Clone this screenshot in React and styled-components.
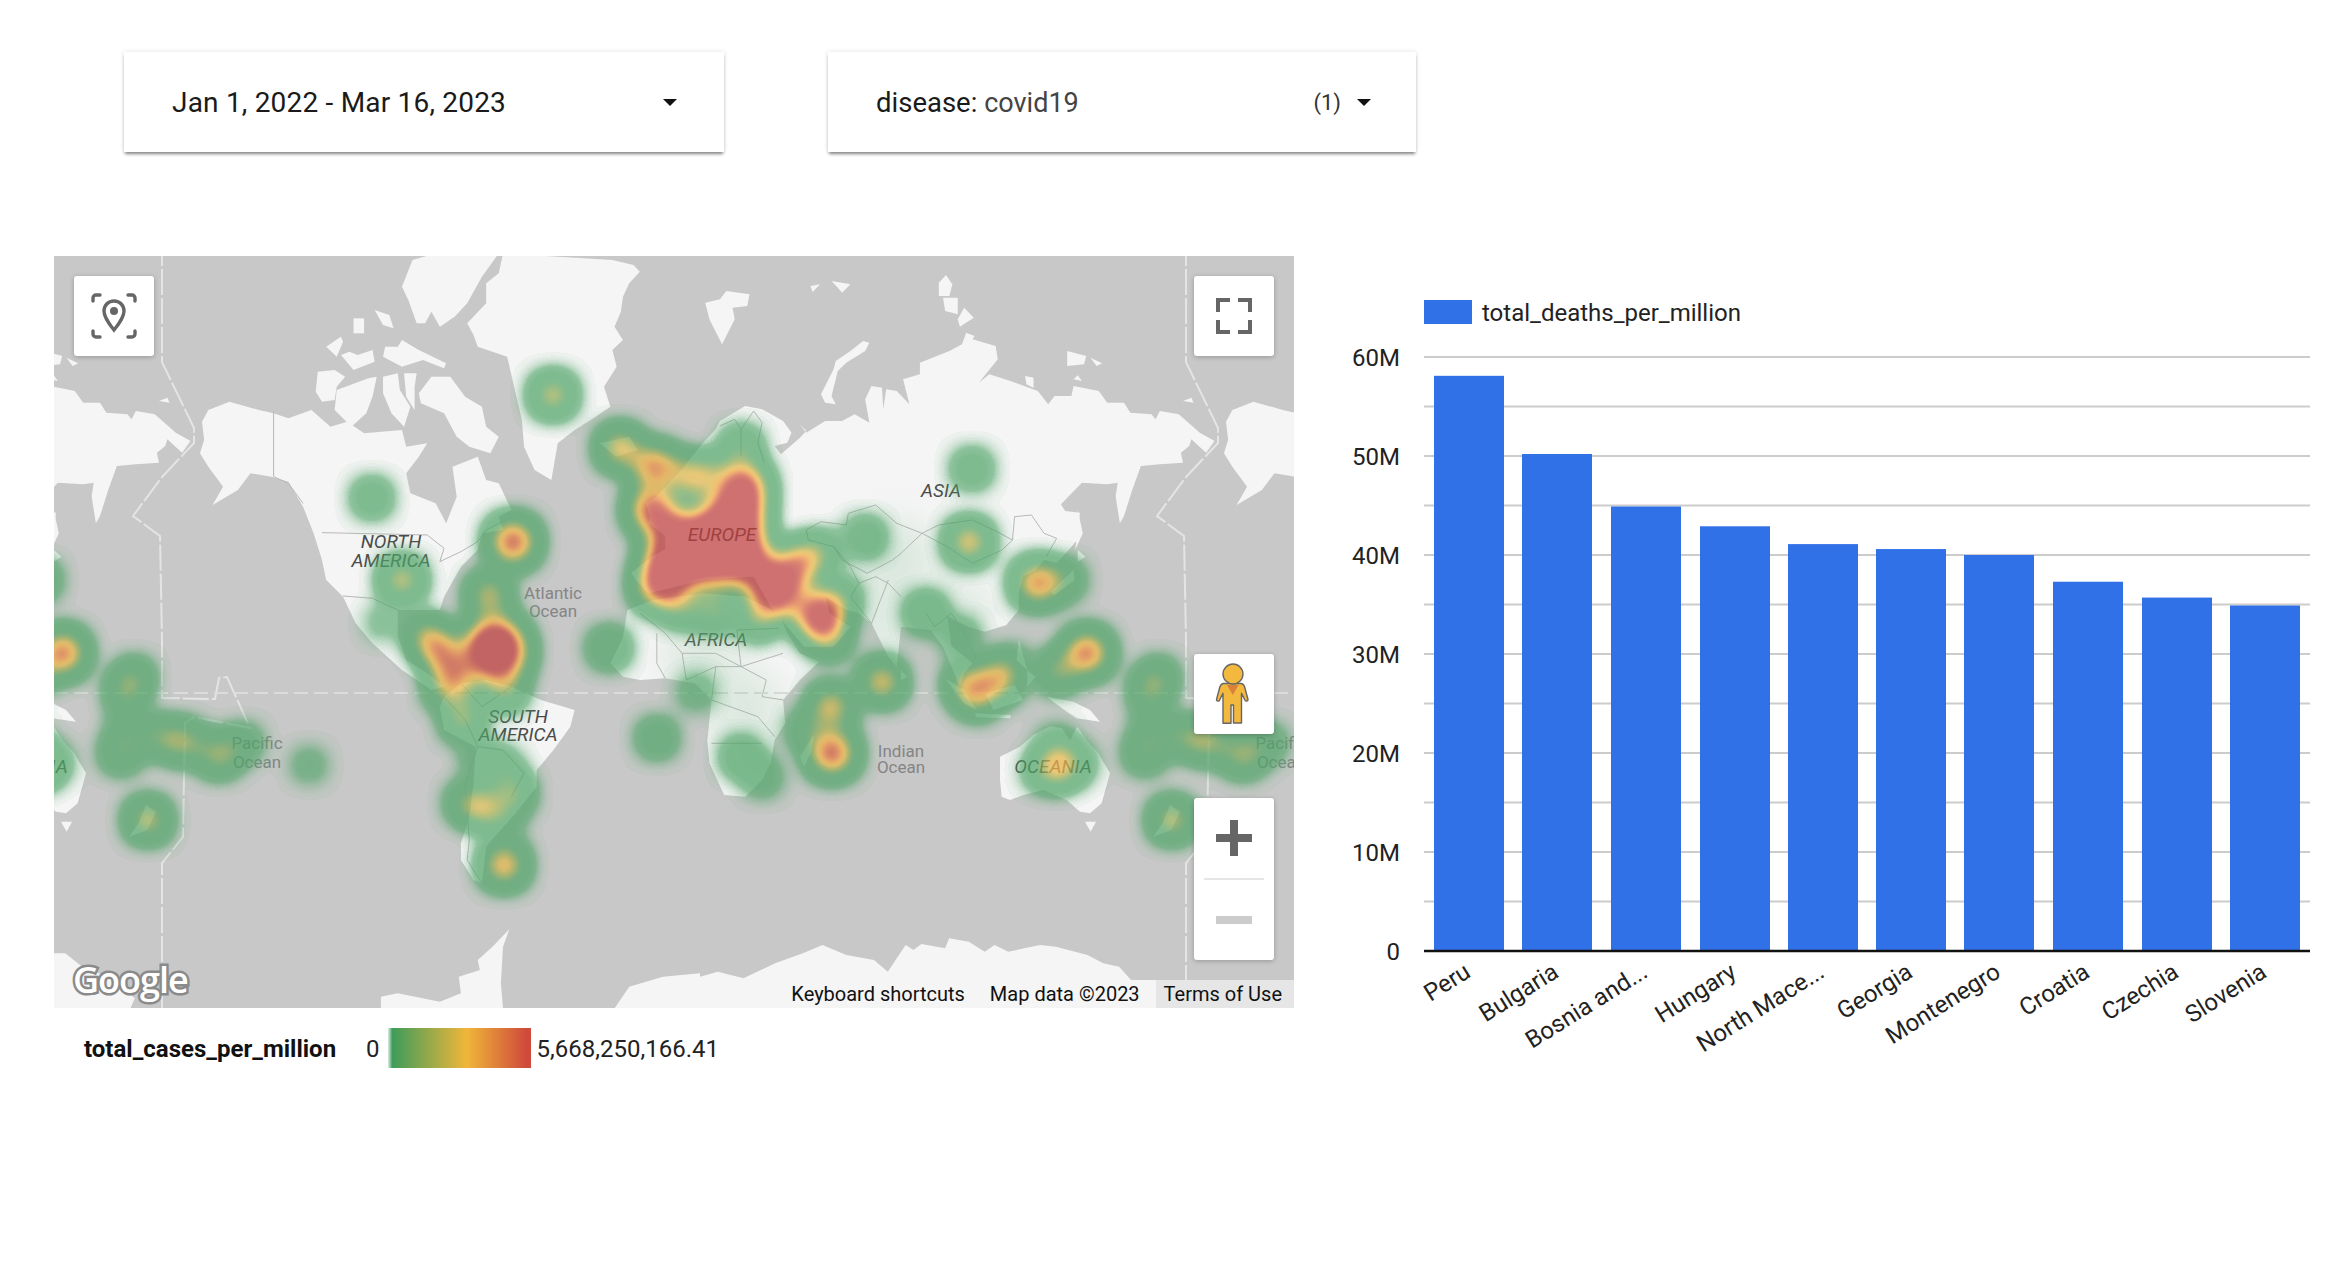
import React from "react";
import styled, { createGlobalStyle } from "styled-components";

const GlobalStyle = createGlobalStyle`
  html, body {
    margin: 0;
    background: #fff;
    font-family: Roboto, "Liberation Sans", sans-serif;
  }
`;

// land traced per region, every region has its own scale
const landRegions = [
  {
    // north america and greenland
    transform: "translate(40 240) scale(.4209 .3333)",
    land: [
      "1100,40 1290,55 1360,60 1410,75 1425,95 1400,130 1385,170 1380,215 1365,260 1385,300 1360,330 1370,380 1340,440 1355,500 1320,530 1270,570 1230,610 1215,720 1175,690 1150,620 1145,540 1130,460 1110,350 1040,320 1030,285 1015,250 1060,190 1060,130 1090,100",
      "885,60 940,40 1090,40 1050,110 1015,190 985,230 950,260 930,215 915,250 895,250 875,180 860,140",
      "660,395 700,390 725,410 705,440 700,480 670,485 655,455",
      "715,345 735,335 755,345 790,330 795,365 745,390",
      "680,320 715,290 720,305 705,350",
      "745,235 770,235 770,280 745,280",
      "795,210 830,225 840,265 815,255",
      "820,320 850,320 860,300 900,330 965,370 960,385 910,360 860,380 815,350",
      "705,450 780,415 800,410 790,470 775,520 740,560 700,510",
      "815,410 850,400 855,450 880,500 865,560 835,520 815,460",
      "865,400 895,400 890,440 890,510 870,470",
      "900,460 930,410 975,410 1010,470 1050,500 1060,560 1090,590 1070,640 1020,620 990,590 960,520 905,490",
      "385,545 400,510 450,485 520,510 555,520 590,535 645,510 690,560 730,545 770,580 860,570 870,620 920,610 900,650 870,700 880,760 940,790 965,850 990,770 980,680 1040,650 1060,720 1090,730 1120,810 1090,830 1100,870 1050,880 1040,930 1000,980 960,1070 950,1110 850,1110 850,1190 870,1260 920,1300 960,1340 930,1350 860,1290 790,1210 750,1150 720,1070 680,1020 670,960 650,880 625,800 590,725 550,710 500,700 470,750 410,795 435,740 400,680 380,640 390,600",
      "1330,610 1400,590 1420,630 1370,650",
      "1440,790 1480,760 1490,830 1450,840",
    ],
    borders: [
      "670,878 920,885 960,925 950,965 1000,935 1040,905 1060,870 1120,830",
      "555,515 555,710 590,730 625,790",
      "720,1068 790,1075 850,1110",
    ],
  },
  {
    // eurasia, north coast is from the top crop, south from the lower one
    transform: "translate(640 256) scale(.4209 .3333)",
    land: [
      "190,495 250,450 290,460 340,495 360,530 350,560 320,570 335,595 380,545 395,525 380,505 395,530 440,495 480,495 510,475 545,500 535,430 550,390 575,395 578,460 585,400 610,405 640,445 625,370 665,355 665,320 735,285 765,265 775,230 795,240 790,250 845,270 850,310 805,380 830,355 880,375 945,405 970,445 985,420 1025,420 1030,390 1090,405 1110,440 1150,440 1165,470 1215,475 1225,490 1235,465 1280,475 1330,530 1365,555 1345,590 1310,550 1305,570 1285,590 1290,620 1235,625 1190,630 1180,665 1170,700 1150,780 1140,802 1130,720 1135,680 1110,685 1050,680 1000,745 1010,765 1045,770 1040,850 1020,880 990,920 960,912 940,942 910,962 900,1012 900,1062 870,1107 820,1127 780,1112 730,1080 740,1170 790,1222 770,1252 760,1292 720,1172 690,1122 620,1112 610,1232 590,1202 550,1102 520,1072 490,1062 440,1022 450,1072 500,1112 460,1172 390,1172 350,1112 310,1052 270,962 150,972 60,1000 20,1012 -10,972 -20,950 30,900 60,880 60,840 20,800 40,720 100,640 150,560 180,520",
      "155,140 190,130 205,105 260,115 255,150 220,155 225,190 195,265 175,215 165,190",
      "530,255 545,260 535,285 490,320 470,345 455,420 465,445 440,440 430,415 460,340 465,315 500,285",
      "405,90 428,85 410,108",
      "455,75 500,85 480,110 470,95",
      "710,80 727,57 742,85 735,120 710,120",
      "720,125 755,125 755,175 725,165",
      "770,155 793,185 760,212 755,190",
      "1015,285 1060,300 1055,325 1015,330",
      "1070,305 1098,322 1085,330",
      "1290,435 1310,425 1315,440",
      "1030,370 1040,358 1050,375",
      "915,360 935,365 935,395 918,385",
    ],
    borders: ["190,510 225,490 240,520 240,600", "240,520 270,465 290,500 280,560 295,620"],
  },
  {
    // africa, south asia islands
    transform: "translate(640 380) scale(.4209 .3333)",
    land: [
      "-30,690 30,660 150,640 250,650 330,700 350,760 380,820 425,845 380,900 340,960 345,1030 320,1080 310,1150 290,1200 250,1250 200,1245 165,1150 160,1080 170,960 130,910 60,895 0,900 -40,890 -70,850 -40,770",
      "380,1130 415,1060 405,1120 390,1160",
      "1040,390 1052,460 1034,510 1040,440",
      "1040,510 1058,530 1040,545",
      "975,635 1030,570 1032,600 985,645",
      "900,780 920,870 895,840",
      "620,870 635,890 620,900",
      "725,895 770,930 800,990 770,970",
      "820,940 890,915 910,960 840,990",
      "795,1000 880,1005 880,1015 800,1012",
      "920,870 940,890 920,920",
    ],
    borders: [
      "395,450 430,425 490,435 495,400 560,375 610,430 670,460 710,435 790,420 840,450 885,480 860,510 790,550 730,500 670,460",
      "885,480 890,410 930,405 960,460 990,475 965,530",
      "395,450 400,480 460,500 480,540 540,580 600,540 620,520 670,460",
      "460,500 500,560 520,610 560,590 590,610 620,650",
      "520,610 500,650 550,730 590,600",
      "680,700 700,740 740,700 770,760 800,840",
      "0,700 60,760 100,820 180,820 240,860 340,820",
      "40,760 40,850 60,895",
      "100,820 110,900 180,860 170,960",
      "180,860 240,860 300,900 290,950 340,960",
      "170,960 280,1010 320,1070",
      "170,1090 290,1090",
      "240,860 230,750 330,745",
    ],
  },
  {
    // south america
    transform: "translate(40 640) scale(.4209 .3333)",
    land: [
      "960,170 1000,130 1060,120 1120,140 1190,180 1270,210 1260,260 1220,330 1180,390 1180,440 1130,520 1080,590 1060,620 1050,730 1030,720 1000,660 1000,610 1020,530 1030,430 1035,320 960,270 950,200",
    ],
    borders: [
      "960,170 1010,240 1040,320 1100,330 1150,400 1120,470",
      "1040,320 1010,430 1020,600 1015,660 1050,730",
      "1000,130 1050,200 1120,140",
    ],
  },
  {
    // australia, new guinea, new zealand
    transform: "translate(1000 640) scale(.3333 .3333)",
    land: [
      "0,350 60,320 100,285 150,258 185,265 210,300 232,260 260,300 295,340 330,400 305,490 270,520 240,515 200,480 130,450 70,465 30,480 5,470 0,420",
      "255,545 288,545 272,575",
      "140,170 220,185 270,210 300,245 230,235 200,215",
      "510,495 540,515 515,570 460,590 490,545",
    ],
    borders: [],
  },
];

// antarctica stays at one place, it isn't repeated with the rest
const polarRegions = [
  {
    transform: "translate(40 640) scale(.4209 .3333)",
    land: [
      "33,940 60,940 100,980 180,1020 225,1075 215,1105 33,1105",
      "810,1105 810,1070 850,1060 950,1085 1000,1060 995,1010 1045,990 1040,960 1075,920 1115,868 1100,920 1095,1030 1100,1105",
      "1365,1105 1400,1040 1480,1010 1568,1000 1568,1105",
    ],
  },
  {
    transform: "translate(700 780) scale(.3954 .3333)",
    land: [
      "0,684 0,590 45,575 110,595 190,550 260,520 310,495 370,525 440,540 475,575 520,495 540,510 560,492 620,505 630,475 680,485 720,515 745,495 780,515 860,495 900,500 980,525 1020,550 1060,560 1090,600 1502,600 1502,684",
    ],
  },
];

const hotZones = [
  "652,512 692,522 722,500 742,490 758,500 760,530 752,566 732,580 698,580 668,592 648,588 650,552 662,534",
  "468,640 485,622 510,623 524,648 516,672 488,676 468,664",
];

// x, y, radius before the blur
const heatSpots = [
  [553, 395, 12], [372, 498, 8], [620, 448, 13], [654, 467, 15], [513, 542, 17], [402, 580, 12],
  [489, 595, 12], [382, 623, 5], [425, 635, 10], [440, 650, 13], [448, 668, 9], [445, 690, 9],
  [465, 715, 9], [505, 690, 10], [460, 680, 10], [482, 807, 11], [513, 793, 10], [465, 803, 8],
  [503, 820, 7], [503, 767, 7], [480, 760, 7], [461, 723, 8], [504, 865, 14], [657, 738, 8],
  [609, 648, 9], [696, 692, 6], [741, 757, 8], [762, 777, 7], [775, 590, 22], [798, 564, 14],
  [820, 615, 20], [715, 610, 10], [682, 607, 9], [758, 620, 9], [829, 640, 9], [842, 597, 7],
  [820, 553, 9], [741, 447, 9], [710, 470, 7], [680, 470, 7], [695, 480, 11], [865, 537, 8],
  [972, 469, 8], [969, 542, 13], [1037, 583, 15], [1065, 580, 8], [926, 613, 9], [968, 685, 12],
  [998, 680, 13], [960, 637, 7], [977, 700, 9], [1011, 663, 6], [882, 682, 13], [831, 707, 13],
  [832, 753, 17], [805, 730, 7], [1087, 653, 16], [1057, 672, 10], [1150, 692, 9], [1158, 677, 8],
  [1145, 753, 9], [1152, 727, 7], [1182, 737, 9], [1208, 742, 11], [1243, 755, 11], [1267, 743, 7],
  [1057, 768, 12], [1040, 770, 6], [1077, 763, 7], [1057, 745, 7], [1172, 820, 12], [309, 765, 5.5],
  // lobes of the hot area over europe
  [652, 510, 17], [660, 585, 18], [742, 488, 20], [750, 562, 18],
];

// pale haze on the land round the heat
const hazeSpots = [
  [700, 655, 34], [745, 705, 34], [760, 760, 28], [895, 560, 40], [880, 625, 30], [960, 610, 28],
];

const mapLabels = [
  { text: "NORTH", x: 391, y: 548, kind: "land" },
  { text: "AMERICA", x: 391, y: 567, kind: "land" },
  { text: "Atlantic", x: 553, y: 599, kind: "sea" },
  { text: "Ocean", x: 553, y: 617, kind: "sea" },
  { text: "Pacific", x: 257, y: 749, kind: "sea" },
  { text: "Ocean", x: 257, y: 768, kind: "sea" },
  { text: "Pacific", x: 1281, y: 749, kind: "sea" },
  { text: "Ocean", x: 1281, y: 768, kind: "sea" },
  { text: "Indian", x: 901, y: 757, kind: "sea" },
  { text: "Ocean", x: 901, y: 773, kind: "sea" },
  { text: "ASIA", x: 941, y: 497, kind: "land" },
  { text: "EUROPE", x: 722, y: 541, kind: "land" },
  { text: "AFRICA", x: 716, y: 646, kind: "land" },
  { text: "SOUTH", x: 518, y: 723, kind: "land" },
  { text: "AMERICA", x: 518, y: 741, kind: "land" },
  { text: "OCEANIA", x: 1053, y: 773, kind: "land" },
  { text: "OCEANIA", x: 29, y: 773, kind: "land" },
];

const dateLine =
  "162,240 162,362 194,428 194,443 162,477 133,516 160,536 162,640 162,698 215,699 219,678 227,677 250,728 194,717 185,723 183,837 162,863 162,1010";

const GREEN = [79, 165, 103];
const RED = [192, 62, 62];
const heatRamp = [GREEN, GREEN, GREEN, GREEN, GREEN, [95, 165, 98], [130, 170, 90], [175, 175, 78], [225, 185, 80], [240, 175, 70], [235, 140, 70], [215, 100, 65], [200, 75, 62], RED, RED, RED, RED, RED, RED, RED, RED];
const rampChannel = (i) => heatRamp.map((c) => (c[i] / 255).toFixed(3)).join(" ");
const rampAlpha = "0 .62 .72 .72 .72 .72 .73 .74 .75 .75 .74 .73 .72 .72 .72 .72 .72 .72 .72 .72 .72";

const bars = [
  { name: "Peru", value: 58.1, x: 1434 },
  { name: "Bulgaria", value: 50.2, x: 1522 },
  { name: "Bosnia and...", value: 44.9, x: 1611 },
  { name: "Hungary", value: 42.9, x: 1700 },
  { name: "North Mace...", value: 41.1, x: 1788 },
  { name: "Georgia", value: 40.6, x: 1876 },
  { name: "Montenegro", value: 40, x: 1964 },
  { name: "Croatia", value: 37.3, x: 2053 },
  { name: "Czechia", value: 35.7, x: 2142 },
  { name: "Slovenia", value: 34.9, x: 2230 },
];

const ZERO_Y = 951;
const PER_MILLION = 9.9;
const ticks = [0, 10, 20, 30, 40, 50, 60];
const gridLines = [5, 10, 15, 20, 25, 30, 35, 40, 45, 50, 55, 60];

const Page = styled.div`
  width: 2352px;
  height: 1288px;
  overflow: hidden;
  box-sizing: border-box;
  padding-top: 52px;
`;

const FilterRow = styled.div`
  display: flex;
  gap: 104px;
  padding-left: 124px;
`;

const FilterCard = styled.div`
  width: ${(p) => p.$width}px;
  height: 100px;
  box-sizing: border-box;
  padding: 0 ${(p) => p.$right}px 0 48px;
  display: flex;
  align-items: center;
  background: #fff;
  box-shadow: 0 3px 3px -1px rgba(0, 0, 0, 0.45), 0 0 5px rgba(0, 0, 0, 0.12);
  font-size: ${(p) => p.$size}px;
  color: #1a1a1a;
  letter-spacing: ${(p) => p.$spacing}px;
`;

const FilterValue = styled.span`
  color: #444;
  font-size: 27px;
`;

const Count = styled.span`
  margin-left: auto;
  font-size: 22px;
  color: #333;
`;

const Caret = styled.i`
  width: 0;
  height: 0;
  margin-left: ${(p) => p.$gap}px;
  border-left: 7px solid transparent;
  border-right: 7px solid transparent;
  border-top: 7px solid #111;
`;

const MainRow = styled.div`
  display: flex;
  margin-top: 104px;
  padding-left: 54px;
`;

const MapColumn = styled.div`
  width: 1240px;
  flex: none;
`;

const MapFrame = styled.div`
  position: relative;
  width: 1240px;
  height: 752px;
  overflow: hidden;
  background: #c8c8c8;
`;

const MapCanvas = styled.svg`
  display: block;
  width: 1240px;
  height: 752px;
`;

const MapLabel = styled.text`
  font-family: Roboto, sans-serif;
  text-anchor: middle;
  font-size: ${(p) => (p.$kind === "land" ? 19 : 17)}px;
  font-style: ${(p) => (p.$kind === "land" ? "italic" : "normal")};
  fill: ${(p) => (p.$kind === "land" ? "#4a4a4a" : "#858585")};
`;

const ControlButton = styled.div`
  position: absolute;
  left: ${(p) => p.$left}px;
  top: ${(p) => p.$top}px;
  width: 80px;
  height: 80px;
  display: flex;
  align-items: center;
  justify-content: center;
  background: #fff;
  border-radius: 3px;
  box-shadow: 0 1px 5px rgba(0, 0, 0, 0.25);
`;

const ZoomControl = styled.div`
  position: absolute;
  left: 1140px;
  top: 542px;
  width: 80px;
  height: 162px;
  display: flex;
  flex-direction: column;
  align-items: center;
  background: #fff;
  border-radius: 3px;
  box-shadow: 0 1px 5px rgba(0, 0, 0, 0.25);
`;

const ZoomHalf = styled.div`
  height: 80px;
  width: 100%;
  display: flex;
  align-items: center;
  justify-content: center;
`;

const ZoomDivider = styled.div`
  width: 60px;
  height: 2px;
  flex: none;
  background: #e6e6e6;
`;

const GoogleMark = styled.span`
  position: absolute;
  left: 19px;
  top: 702px;
  font-family: "Open Sans", sans-serif;
  font-size: 36px;
  line-height: 44px;
  font-weight: 600;
  letter-spacing: -1px;
  color: #fff;
  -webkit-text-stroke: 5px #8a8a8a;
  paint-order: stroke fill;
`;

const Attribution = styled.div`
  position: absolute;
  right: 0;
  bottom: 0;
  height: 28px;
  display: flex;
  font-size: 20px;
  line-height: 28px;
  color: #111;
`;

const AttributionPart = styled.span`
  padding: 0 ${(p) => p.$right}px 0 ${(p) => p.$left}px;
  background: ${(p) => p.$bg};
`;

const MapLegend = styled.div`
  display: flex;
  align-items: center;
  height: 40px;
  margin-top: 20px;
  padding-left: 30px;
  font-size: 24px;
  color: #222;
`;

const LegendText = styled.span`
  margin-top: 2px;
`;

const LegendTitle = styled(LegendText)`
  font-weight: 700;
  color: #111;
  margin-right: 30px;
`;

const GradientBar = styled.div`
  width: 143px;
  height: 40px;
  margin: 0 6px 0 8px;
  background: linear-gradient(
    90deg,
    #dfeee3 0,
    #3e9c5a 3%,
    #f0b63a 55%,
    #cf4a3a 97%
  );
`;

const ChartCanvas = styled.svg`
  display: block;
  flex: none;
  width: 1024px;
  height: 824px;
  margin-left: 24px;
  font-family: Roboto, sans-serif;
  font-size: 24px;
`;

const ChartText = styled.text`
  fill: #222;
`;

function LocateIcon() {
  return (
    <svg width="80" height="80" viewBox="0 0 80 80" fill="none" stroke="#666">
      <path strokeWidth="3.4" strokeLinecap="round" d="M19 25v-3a3 3 0 0 1 3-3h4M54 19h4a3 3 0 0 1 3 3v3M19 55v3a3 3 0 0 0 3 3h4M54 61h4a3 3 0 0 0 3-3v-3" />
      <path strokeWidth="3.4" d="M40 25c-6 0-10 4.600-10 10 0 7 10 19 10 19s10-12 10-19c0-5.400-4-10-10-10z" />
      <circle cx="40" cy="35" r="4" fill="#666" stroke="none" />
    </svg>
  );
}

function FullscreenIcon() {
  return (
    <svg width="80" height="80" viewBox="0 0 80 80" fill="none" stroke="#666" strokeWidth="4">
      <path d="M24 36V24h12M44 24h12v12M24 44v12h12M44 56h12V44" />
    </svg>
  );
}

function Pegman() {
  return (
    <svg width="80" height="80" viewBox="0 0 80 80">
      <g fill="#f3b83e" stroke="#666" strokeWidth="1.4" strokeLinejoin="round">
        <path d="M29 29.500c-1.500.5-2.500 1.500-3 3l-3.500 13c-.3 1.500 2 2.200 3 .8l3.500-7v30h8V51h2.500v18h8V39.300l3.500 7c1 1.400 3.300.7 3-.8l-3.500-13c-.5-1.500-1.500-2.500-3-3z" />
        <circle cx="39" cy="20" r="10" />
      </g>
      <path d="M33 31h11.500l-5.700 10z" fill="#d9803a" />
    </svg>
  );
}

function WorldMap() {
  const repeats = [-1024, 0, 1024];
  return (
    <MapCanvas viewBox="54 256 1240 752">
      <defs>
        <filter id="heat" filterUnits="userSpaceOnUse" x="54" y="256" width="1240" height="752" colorInterpolationFilters="sRGB">
          <feGaussianBlur in="SourceGraphic" stdDeviation="14" />
          <feColorMatrix type="matrix" values="0 0 0 1 0 0 0 0 1 0 0 0 0 1 0 0 0 0 1 0" />
          <feComponentTransfer>
            <feFuncR type="table" tableValues={rampChannel(0)} />
            <feFuncG type="table" tableValues={rampChannel(1)} />
            <feFuncB type="table" tableValues={rampChannel(2)} />
            <feFuncA type="table" tableValues={rampAlpha} />
          </feComponentTransfer>
        </filter>
        <filter id="haze" filterUnits="userSpaceOnUse" x="54" y="256" width="1240" height="752">
          <feGaussianBlur stdDeviation="18" />
        </filter>
        <g id="world">
          {landRegions.map((region, i) => (
            <g key={i} transform={region.transform}>
              {region.land.map((pts, j) => (
                <polygon key={j} points={pts} fill="#f5f5f5" />
              ))}
              {region.borders.map((pts, j) => (
                <polyline key={j} points={pts} fill="none" stroke="#b8b8b8" strokeWidth="1" vectorEffect="non-scaling-stroke" />
              ))}
            </g>
          ))}
          <polyline points={dateLine} fill="none" stroke="#e4e4e4" strokeWidth="2" strokeDasharray="26 3" />
        </g>
      </defs>
      {repeats.map((dx) => (
        <use key={dx} href="#world" x={dx} />
      ))}
      {polarRegions.map((region, i) => (
        <g key={i} transform={region.transform}>
          {region.land.map((pts, j) => (
            <polygon key={j} points={pts} fill="#f5f5f5" />
          ))}
        </g>
      ))}
      <line x1="54" x2="1294" y1="693" y2="693" stroke="#dcdcdc" strokeWidth="2" strokeDasharray="14 6" />
      {mapLabels.map((label, i) => (
        <MapLabel key={i} x={label.x} y={label.y} $kind={label.kind}>
          {label.text}
        </MapLabel>
      ))}
      <g filter="url(#haze)" fill="#7ab88d" opacity=".22">
        {hazeSpots.map(([x, y, r], i) => (
          <circle key={i} cx={x} cy={y} r={r} />
        ))}
      </g>
      <g filter="url(#heat)">
        {hotZones.map((pts, i) => (
          <polygon key={i} points={pts} fill="#000" />
        ))}
        {repeats.map((dx) =>
          heatSpots.map(([x, y, r], i) => (
            <circle key={dx + "-" + i} cx={x + dx} cy={y} r={r} fill="#000" />
          ))
        )}
      </g>
    </MapCanvas>
  );
}

function BarChart() {
  return (
    <ChartCanvas viewBox="1318 256 1024 824">
      <rect x="1424" y="300" width="48" height="24" fill="#3071e8" />
      <ChartText x="1482" y="321">total_deaths_per_million</ChartText>
      {gridLines.map((m) => (
        <line key={m} x1="1424" x2="2310" y1={ZERO_Y - m * PER_MILLION} y2={ZERO_Y - m * PER_MILLION} stroke="#ccc" strokeWidth="2" />
      ))}
      {ticks.map((m) => (
        <ChartText key={m} x="1400" y={ZERO_Y - m * PER_MILLION + 9} textAnchor="end">
          {m === 0 ? "0" : m + "M"}
        </ChartText>
      ))}
      {bars.map((bar) => (
        <rect key={bar.name} x={bar.x} y={ZERO_Y - bar.value * PER_MILLION} width="70" height={bar.value * PER_MILLION} fill="#3071e8" />
      ))}
      <line x1="1424" x2="2310" y1={ZERO_Y} y2={ZERO_Y} stroke="#111" strokeWidth="2.5" />
      {bars.map((bar) => (
        <ChartText key={bar.name} textAnchor="end" transform={`translate(${bar.x + 38} 976) rotate(-32)`}>
          {bar.name}
        </ChartText>
      ))}
    </ChartCanvas>
  );
}

export default function App() {
  return (
    <Page>
      <GlobalStyle />
      <FilterRow>
        <FilterCard $width={600} $right={38} $size={28} $spacing={0.2}>
          Jan 1, 2022 - Mar 16, 2023
          <Caret $gap={157} />
        </FilterCard>
        <FilterCard $width={588} $right={45} $size={27.5} $spacing={0}>
          <span>
            disease:&nbsp;<FilterValue>covid19</FilterValue>
          </span>
          <Count>(1)</Count>
          <Caret $gap={16} />
        </FilterCard>
      </FilterRow>
      <MainRow>
        <MapColumn>
          <MapFrame>
            <WorldMap />
            <ControlButton $left={20} $top={20}>
              <LocateIcon />
            </ControlButton>
            <ControlButton $left={1140} $top={20}>
              <FullscreenIcon />
            </ControlButton>
            <ControlButton $left={1140} $top={398}>
              <Pegman />
            </ControlButton>
            <ZoomControl>
              <ZoomHalf>
                <svg width="36" height="36" viewBox="0 0 36 36">
                  <path d="M14 0h8v14h14v8H22v14h-8V22H0v-8h14z" fill="#666" />
                </svg>
              </ZoomHalf>
              <ZoomDivider />
              <ZoomHalf>
                <svg width="36" height="8" viewBox="0 0 36 8">
                  <rect width="36" height="8" fill="#ccc" />
                </svg>
              </ZoomHalf>
            </ZoomControl>
            <GoogleMark>Google</GoogleMark>
            <Attribution>
              <AttributionPart $left={0} $right={25} $bg="transparent">Keyboard shortcuts</AttributionPart>
              <AttributionPart $left={0} $right={16} $bg="transparent">Map data ©2023</AttributionPart>
              <AttributionPart $left={8} $right={12} $bg="#e6e6e6">Terms of Use</AttributionPart>
            </Attribution>
          </MapFrame>
          <MapLegend>
            <LegendTitle>total_cases_per_million</LegendTitle>
            <LegendText>0</LegendText>
            <GradientBar />
            <LegendText>5,668,250,166.41</LegendText>
          </MapLegend>
        </MapColumn>
        <BarChart />
      </MainRow>
    </Page>
  );
}
